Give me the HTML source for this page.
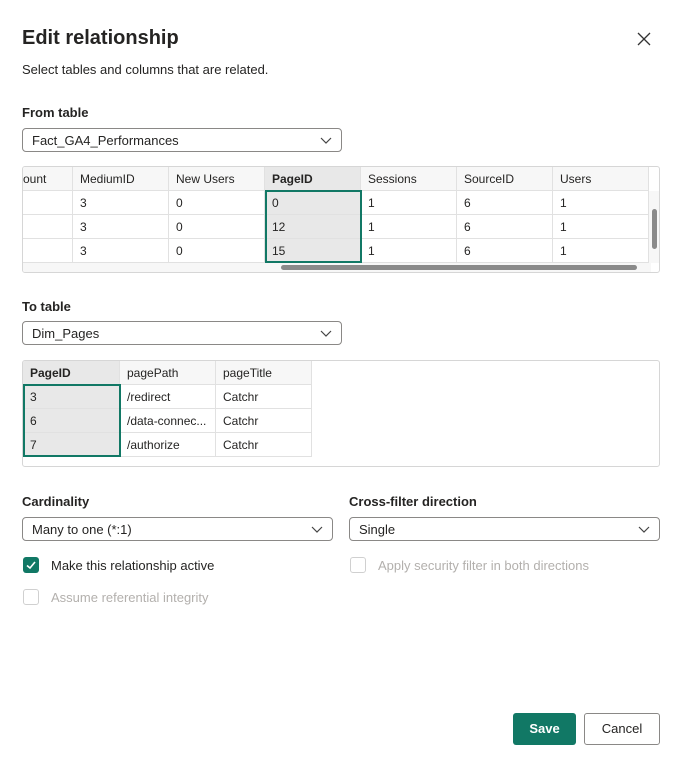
<!DOCTYPE html>
<html><head><style>
*{box-sizing:border-box;margin:0;padding:0}
body{width:679px;height:763px;background:#fff;font-family:"Liberation Sans",sans-serif;color:#252423;position:relative;overflow:hidden;font-size:13px}
.a{position:absolute;white-space:nowrap}
.sel{position:absolute;border:1px solid #8a8886;border-radius:4px;height:24px;padding:4px 9px;font-size:13px}
.chev{position:absolute;right:9px;top:8px}
.tbl{position:absolute;border:1px solid #d6d6d6;border-radius:3px;overflow:hidden}
.c{position:absolute;height:24px;border-right:1px solid #e1e1e1;border-bottom:1px solid #e1e1e1;padding:5px 7px;font-size:12px;white-space:nowrap;overflow:hidden}
.h{background:#f7f7f7}
.hl{background:#e8e8e8}
.cb{position:absolute;width:16px;height:16px;border-radius:3px}
.ov{position:absolute;border:2px solid #117865}
</style></head><body>
<div class="a" style="left:22px;top:27px;font-size:20px;font-weight:bold;color:#252423">Edit relationship</div>
<svg class="a" style="left:637px;top:32px" width="14" height="14"><path d="M1 1L13 13M13 1L1 13" stroke="#333" stroke-width="1.3"/></svg>
<div class="a" style="left:22px;top:62px;font-size:13px">Select tables and columns that are related.</div>

<div class="a" style="left:22px;top:105px;font-size:13px;font-weight:bold">From table</div>
<div class="sel" style="left:22px;top:128px;width:320px">Fact_GA4_Performances<svg class="chev" width="12" height="8"><path d="M1 1L6 6L11 1" stroke="#444" fill="none" stroke-width="1.2"/></svg></div>

<div class="tbl" style="left:22px;top:166px;width:638px;height:107px">
<div class="c h" style="left:0;top:0;width:50px;padding-left:0">ount</div>
<div class="c h" style="left:50px;top:0;width:96px">MediumID</div>
<div class="c h" style="left:146px;top:0;width:96px">New Users</div>
<div class="c hl" style="left:242px;top:0;width:96px;font-weight:bold">PageID</div>
<div class="c h" style="left:338px;top:0;width:96px">Sessions</div>
<div class="c h" style="left:434px;top:0;width:96px">SourceID</div>
<div class="c h" style="left:530px;top:0;width:96px">Users</div>
<div class="c" style="left:0;top:24px;width:50px"></div><div class="c" style="left:50px;top:24px;width:96px">3</div><div class="c" style="left:146px;top:24px;width:96px">0</div><div class="c hl" style="left:242px;top:24px;width:96px">0</div><div class="c" style="left:338px;top:24px;width:96px">1</div><div class="c" style="left:434px;top:24px;width:96px">6</div><div class="c" style="left:530px;top:24px;width:96px">1</div>
<div class="c" style="left:0;top:48px;width:50px"></div><div class="c" style="left:50px;top:48px;width:96px">3</div><div class="c" style="left:146px;top:48px;width:96px">0</div><div class="c hl" style="left:242px;top:48px;width:96px">12</div><div class="c" style="left:338px;top:48px;width:96px">1</div><div class="c" style="left:434px;top:48px;width:96px">6</div><div class="c" style="left:530px;top:48px;width:96px">1</div>
<div class="c" style="left:0;top:72px;width:50px"></div><div class="c" style="left:50px;top:72px;width:96px">3</div><div class="c" style="left:146px;top:72px;width:96px">0</div><div class="c hl" style="left:242px;top:72px;width:96px">15</div><div class="c" style="left:338px;top:72px;width:96px">1</div><div class="c" style="left:434px;top:72px;width:96px">6</div><div class="c" style="left:530px;top:72px;width:96px">1</div>
<div class="ov" style="left:242px;top:23px;width:97px;height:73px"></div>
<div style="position:absolute;left:0;top:96px;width:628px;height:10px;background:#f7f7f7"></div>
<div style="position:absolute;left:258px;top:98px;width:356px;height:5px;border-radius:3px;background:#8a8a8a"></div>
<div style="position:absolute;left:626px;top:24px;width:11px;height:72px;background:#f7f7f7"></div>
<div style="position:absolute;left:629px;top:42px;width:5px;height:40px;border-radius:3px;background:#8a8a8a"></div>
</div>

<div class="a" style="left:22px;top:299px;font-size:13px;font-weight:bold">To table</div>
<div class="sel" style="left:22px;top:321px;width:320px">Dim_Pages<svg class="chev" width="12" height="8"><path d="M1 1L6 6L11 1" stroke="#444" fill="none" stroke-width="1.2"/></svg></div>

<div class="tbl" style="left:22px;top:360px;width:638px;height:107px">
<div class="c hl" style="left:0;top:0;width:97px;font-weight:bold">PageID</div>
<div class="c h" style="left:97px;top:0;width:96px">pagePath</div>
<div class="c h" style="left:193px;top:0;width:96px">pageTitle</div>
<div class="c hl" style="left:0;top:24px;width:97px">3</div><div class="c" style="left:97px;top:24px;width:96px">/redirect</div><div class="c" style="left:193px;top:24px;width:96px">Catchr</div>
<div class="c hl" style="left:0;top:48px;width:97px">6</div><div class="c" style="left:97px;top:48px;width:96px">/data-connec...</div><div class="c" style="left:193px;top:48px;width:96px">Catchr</div>
<div class="c hl" style="left:0;top:72px;width:97px">7</div><div class="c" style="left:97px;top:72px;width:96px">/authorize</div><div class="c" style="left:193px;top:72px;width:96px">Catchr</div>
<div class="ov" style="left:0;top:23px;width:98px;height:73px"></div>
</div>

<div class="a" style="left:22px;top:494px;font-weight:bold">Cardinality</div>
<div class="sel" style="left:22px;top:517px;width:311px;padding-left:9px">Many to one (*:1)<svg class="chev" width="12" height="8"><path d="M1 1L6 6L11 1" stroke="#444" fill="none" stroke-width="1.2"/></svg></div>
<div class="a" style="left:349px;top:494px;font-weight:bold">Cross-filter direction</div>
<div class="sel" style="left:349px;top:517px;width:311px">Single<svg class="chev" width="12" height="8"><path d="M1 1L6 6L11 1" stroke="#444" fill="none" stroke-width="1.2"/></svg></div>

<div class="cb" style="left:23px;top:557px;background:#117865"><svg width="16" height="16"><path d="M4 8.5L7 11L12 5" stroke="#fff" stroke-width="1.6" fill="none"/></svg></div>
<div class="a" style="left:51px;top:558px">Make this relationship active</div>
<div class="cb" style="left:23px;top:589px;border:1px solid #d0d0d0"></div>
<div class="a" style="left:51px;top:590px;color:#b3b0ad">Assume referential integrity</div>
<div class="cb" style="left:350px;top:557px;border:1px solid #d0d0d0"></div>
<div class="a" style="left:378px;top:558px;color:#b3b0ad">Apply security filter in both directions</div>

<div class="a" style="left:513px;top:713px;width:63px;height:32px;background:#117865;border-radius:3px;color:#fff;font-weight:bold;text-align:center;line-height:32px">Save</div>
<div class="a" style="left:584px;top:713px;width:76px;height:32px;border:1px solid #8a8886;border-radius:3px;text-align:center;line-height:30px">Cancel</div>
</body></html>
